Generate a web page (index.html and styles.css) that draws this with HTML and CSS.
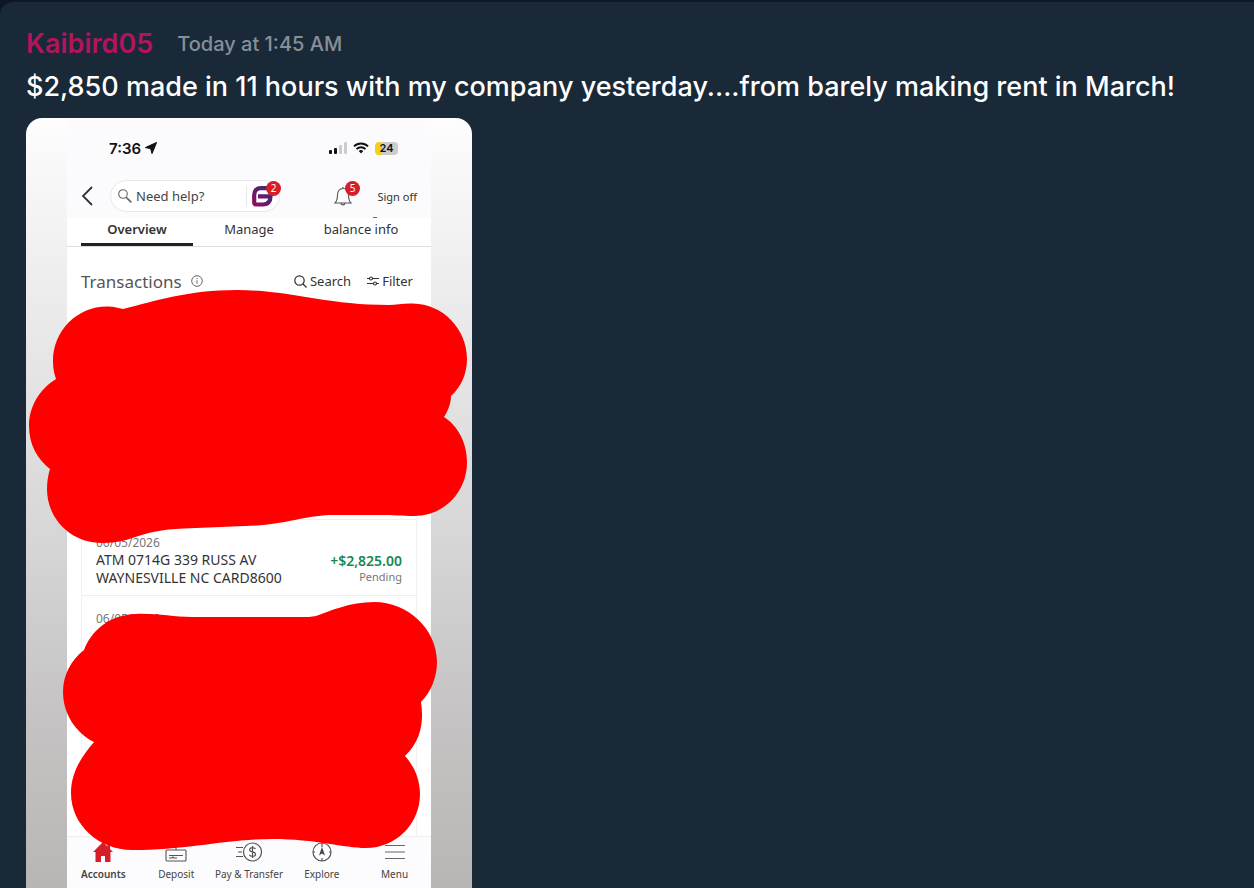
FILE: index.html
```html
<!DOCTYPE html>
<html lang="en">
<head>
<meta charset="utf-8">
<meta name="viewport" content="width=device-width, initial-scale=1">
<title>Message</title>
<link rel="stylesheet" href="styles.css">
</head>
<body>
<article class="message">
  <header class="message-head">
    <a class="author" href="#">Kaibird05</a>
    <time class="time">Today at 1:45 AM</time>
  </header>
  <p class="message-text">$2,850 made in 11 hours with my company yesterday....from barely making rent in March!</p>

  <div class="attachment">
    <div class="screen">
      <div class="top">
        <div class="status">
          <span class="clock">7:36</span>
          <svg class="locate" width="12" height="12" viewBox="0 0 12 12"><path d="M11.6.4 7 11.6 5.6 6.6 .4 5.6Z" fill="#111" stroke="#111" stroke-linejoin="round" stroke-width="1"/></svg>
          <svg class="signal" width="18" height="12" viewBox="0 0 18 12"><rect y="8" width="3" height="4" rx="1" fill="#111"/><rect x="5" y="6" width="3" height="6" rx="1" fill="#111"/><rect x="10" y="3" width="3" height="9" rx="1" fill="#ccc"/><rect x="15" y="0" width="3" height="12" rx="1" fill="#ccc"/></svg>
          <svg class="wifi" width="16" height="12" viewBox="0 0 16 12" fill="none" stroke="#111" stroke-width="2"><path d="M1 4.4a10 10 0 0 1 14 0M3.5 7.1a6.4 6.4 0 0 1 9 0"/><path d="M5.7 9a3.4 3.4 0 0 1 4.6 0L8 11.6Z" fill="#111" stroke="none"/></svg>
          <span class="battery">24</span>
        </div>
        <div class="tools">
          <button class="back" aria-label="Back"><svg width="12" height="20" viewBox="0 0 12 20" fill="none" stroke="#333" stroke-width="1.8"><path d="M11 1 2 10l9 9"/></svg></button>
          <div class="help">
            <svg width="14" height="14" viewBox="0 0 14 14" fill="none" stroke="#666" stroke-width="1.1"><circle cx="5" cy="5" r="4.3"/><path d="m8.3 8.3 5 5" stroke-width="1.7"/></svg>
            <input type="text" placeholder="Need help?" aria-label="Need help?">
            <span class="logo">
              <svg width="21" height="21" viewBox="0 0 21 21" fill="none"><defs><linearGradient id="brand" x1="0" y1="1" x2="1" y2="0"><stop offset="0" stop-color="#8b1059"/><stop offset="1" stop-color="#382b80"/></linearGradient></defs><path d="M19 2.2H9Q2.2 2.2 2.2 9V16Q2.2 18.5 4.5 18.5H11Q18.5 18.500 18.500 10.300H6" stroke="url(#brand)" stroke-width="4.2"/></svg>
              <b class="badge">2</b>
            </span>
          </div>
          <button class="bell" aria-label="Notifications">
            <svg width="18" height="20" viewBox="0 0 18 20" fill="none" stroke="#555" stroke-width="1.1"><path d="M1 17c2-2 2.5-4 2.5-8C3.5 5 5.5 2.5 9 2.5S14.5 5 14.5 9c0 4 .5 6 2.5 8ZM9 2.5V1M7 17.5c.5 1.800 3.5 1.800 4 0"/></svg>
            <b class="badge">5</b>
          </button>
          <button class="signoff">Sign off</button>
        </div>
      </div>

      <nav class="tabs">
        <button class="tab active">Overview</button>
        <button class="tab">Manage</button>
        <button class="tab clipped">balance info</button>
      </nav>

      <div class="section-head">
        <h2>Transactions</h2>
        <svg class="info" width="12" height="12" viewBox="0 0 12 12" fill="none" stroke="#666"><circle cx="6" cy="6" r="5.3"/><path d="M6 5.3v3.5M6 3v1.2"/></svg>
        <button class="action search"><svg width="13" height="13" viewBox="0 0 13 13" fill="none" stroke="#333" stroke-width="1.2"><circle cx="5.5" cy="5.5" r="4.7"/><path d="m9 9 3.5 3.5"/></svg>Search</button>
        <button class="action"><svg width="12" height="10" viewBox="0 0 12 10" fill="none" stroke="#333" stroke-width="1.1"><path d="M0 2.5h2.5m3 0H12M0 7.5h6.5m3 0H12"/><circle cx="4" cy="2.5" r="1.5"/><circle cx="8" cy="7.5" r="1.5"/></svg>Filter</button>
      </div>

      <ul class="list">
        <li class="row hidden-row"></li>
        <li class="row">
          <div><div class="date">06/05/2026</div><div class="desc">ATM 0714G 339 RUSS AV<br>WAYNESVILLE NC CARD8600</div></div>
          <div class="amount"><strong>+$2,825.00</strong><span>Pending</span></div>
        </li>
        <li class="row"><div class="date">06/05/2026</div></li>
      </ul>

      <nav class="bottom">
        <a class="current" href="#"><svg width="20" height="20" viewBox="0 0 20 20"><path d="M10 0 0 10h2.5v10h5.5v-6h4v6h5.5V10H20l-3-3V2h-2.5v2.5Z" fill="#d71e28"/></svg>Accounts</a>
        <a href="#"><svg width="22" height="20" viewBox="0 0 22 20" fill="none" stroke="#555" stroke-width="1.1"><rect x="1" y="8" width="20" height="11" rx="1"/><path d="M11 2v6M4 13.5h14M4 16h3l1-1 1 1h3"/></svg>Deposit</a>
        <a href="#"><svg width="26" height="20" viewBox="0 0 26 20" fill="none" stroke="#555" stroke-width="1.2"><circle cx="16.5" cy="10" r="9"/><path d="M0 5.5h7M2 10h4M0 14.5h7M19.5 7c-.8-1-1.7-1.3-3-1.3-1.7 0-2.9.8-2.9 2.1 0 3 6 1.3 6 4.4 0 1.4-1.3 2.2-3.1 2.2-1.4 0-2.5-.5-3.2-1.5M16.5 4v12"/></svg>Pay &amp; Transfer</a>
        <a href="#"><svg width="20" height="20" viewBox="0 0 20 20" fill="none" stroke="#555" stroke-width="1.2"><circle cx="10" cy="10" r="9"/><path d="M10 1v4M10 16v3M1 10h2M17 10h2"/><path d="m10 5 3 8.5-3-2-3 2Z" fill="#444" stroke="none"/></svg>Explore</a>
        <a href="#"><svg width="22" height="20" viewBox="0 0 22 20" fill="none" stroke="#666" stroke-width="1.2"><path d="M1 3.5h20M1 10h20M1 16.5h20"/></svg>Menu</a>
      </nav>
    </div>

    <svg class="scribble" viewBox="26 118 446 770" aria-hidden="true" fill="#f00">
      <path d="M123 309C155 301 188 290 237 290C290 290 325 305 389 305C396 305 404 303 413 303.5C443 304 467 329 467 359C467 374 461 387 451 396C451 403 448 411 444 417C458 426 467 443 467 462C467 492 444 516 414 516C402 516 394 515 380 515L330 515C302 516 285 525 245 526L184 528.5C137 530 135 543 102 543C71 543 47 519 47 489C47 482 48 475 50 469C37 459 29 444 29 426C29 406 40 389 56 379C54 373 53 368 53 361C53 331 77 306 108 306.5C114 306.5 119 308 123 309Z"/>
      <path d="M135 614C157 613 172 617 192 617L300 617C306 617 312 617 316 616C330 611 350 602 374 602C408 602 437 629 437 662C437 677 431 692 421 702C424 722 421 741 405 756C414 766 420 779 420 794C420 824 396 848 366 848C344 848 315 839 273 839C225 839 188 850 132 850C99 850 71 825 71 793C71 774 80 758 94 742C76 733 63 714 63 692C63 675 71 660 84 650C92 629 111 615 135 614Z"/>
    </svg>
  </div>
</article>
</body>
</html>
```
FILE: styles.css
```css
* { box-sizing: border-box; }

body {
  margin: 0;
  background: #0d1824;
  font-family: Inter, "Liberation Sans", sans-serif;
}

button, input {
  margin: 0;
  padding: 0;
  border: 0;
  background: none;
  color: inherit;
  font: inherit;
}

svg { display: block; flex: none; }

.message {
  display: flex;
  flex-direction: column;
  height: 100vh;
  min-height: 800px;
  overflow: hidden;
  padding: 26px 26px 0;
  border-top: 2px solid #0d1824;
  border-radius: 14px 0 0 0;
  background: #192938;
}

.message-head {
  display: flex;
  align-items: center;
  gap: 24px;
  line-height: 32px;
}

.author {
  color: #b3155c;
  font-size: 27px;
  font-weight: 600;
  text-decoration: none;
}

.time { color: #87909a; font-size: 20px; font-weight: 500; }

.message-text {
  margin: 8px 0 12px;
  color: #fff;
  font-size: 27px;
  font-weight: 500;
  line-height: 38px;
}

.attachment {
  position: relative;
  flex: 1;
  display: flex;
  flex-direction: column;
  width: 446px;
  max-width: 100%;
  padding: 0 41px;
  overflow: hidden;
  border-radius: 16px 16px 0 0;
  background: linear-gradient(#fdfdfd, #ebebeb 24%, #d6d6d6 55%, #c6c4c4 76%, #b9b5b4);
}

.scribble { position: absolute; top: 0; left: 0; width: 100%; }

.screen {
  flex: 1;
  display: flex;
  flex-direction: column;
  background: #fff;
  color: #333;
  font-family: "Noto Sans", "Open Sans", sans-serif;
}

.top { height: 100px; padding: 20px 14px 0; background: #fbfafc; }

.status {
  display: flex;
  align-items: center;
  height: 20px;
  padding: 0 19px 0 28px;
  color: #111;
  font-family: Inter, sans-serif;
  font-weight: 600;
}

.clock { font-size: 15px; }
.locate { margin-left: 4px; }
.signal { margin-left: auto; }
.wifi { margin: 0 6px; }

.battery {
  width: 23px;
  border-radius: 4px;
  background: linear-gradient(90deg, #f9cf16 6px, #ccc 6px);
  font-size: 11px;
  line-height: 13px;
  text-align: center;
}

.tools {
  display: flex;
  align-items: center;
  height: 32px;
  margin-top: 22px;
}

.back { width: 29px; }

.help {
  display: flex;
  align-items: center;
  width: 170px;
  height: 32px;
  padding: 0 6px 0 7px;
  border: 1px solid #e8e6e8;
  border-radius: 16px;
  background: #fff;
}

.help input { flex: 1; min-width: 0; margin-left: 4px; font-size: 13px; }
.help input::placeholder { color: #444; opacity: 1; }

.logo {
  position: relative;
  padding-left: 5px;
  border-left: 1px solid #e8e6e8;
}

.badge {
  position: absolute;
  top: -5px;
  right: -8px;
  width: 15px;
  border-radius: 50%;
  background: #d71e28;
  color: #fff;
  font-size: 10px;
  font-weight: 400;
  line-height: 15px;
  text-align: center;
}

.bell { position: relative; margin-left: 54px; }
.signoff { margin-left: auto; font-size: 11px; }

.tabs {
  display: grid;
  grid-template-columns: repeat(3, 1fr);
  height: 29px;
  padding: 0 14px;
  border-bottom: 1px solid #ddd;
}

.tab { position: relative; padding-bottom: 6px; font-size: 13px; line-height: 22px; white-space: nowrap; }
.active { padding-bottom: 3px; border-bottom: 3px solid #222; font-weight: 600; }
.clipped::before {
  position: absolute;
  top: -1px;
  left: 68px;
  width: 4px;
  height: 1px;
  background: #666;
  content: "";
}

.section-head {
  display: flex;
  align-items: center;
  height: 68px;
  padding: 0 18px 0 14px;
}

.section-head h2 { margin: 0; color: #555; font-size: 17px; font-weight: 400; }
.info { margin-left: 9px; }
.action { display: flex; align-items: center; gap: 3px; margin-left: 16px; font-size: 13px; }
.search { margin-left: auto; }

.list {
  flex: 1;
  margin: 0 14px;
  padding: 0;
  border: 1px solid #f2f2f2;
  border-bottom: 0;
  list-style: none;
}

.row {
  display: flex;
  justify-content: space-between;
  align-items: flex-end;
  padding: 14px 14px 8px;
  border-bottom: 1px solid #eee;
}

.row:last-child { border-bottom: 0; }
.hidden-row { height: 204px; }
.date { color: #777; font-size: 12px; line-height: 17px; }
.desc { font-size: 14px; line-height: 18px; }

.amount {
  display: flex;
  flex-direction: column;
  align-items: flex-end;
  padding-bottom: 2px;
  color: #777;
  font-size: 11px;
  line-height: 16px;
}

.amount strong { color: #178757; font-size: 14px; font-weight: 600; }

.bottom {
  display: grid;
  grid-template-columns: repeat(5, 1fr);
  height: 52px;
  padding-top: 5px;
  border-top: 1px solid #eee;
  background: #fcfbfd;
}

.bottom a {
  display: flex;
  flex-direction: column;
  align-items: center;
  gap: 4px;
  color: #444;
  font-size: 10px;
  line-height: 16px;
  text-decoration: none;
  white-space: nowrap;
}

.bottom .current { font-weight: 600; }
```
